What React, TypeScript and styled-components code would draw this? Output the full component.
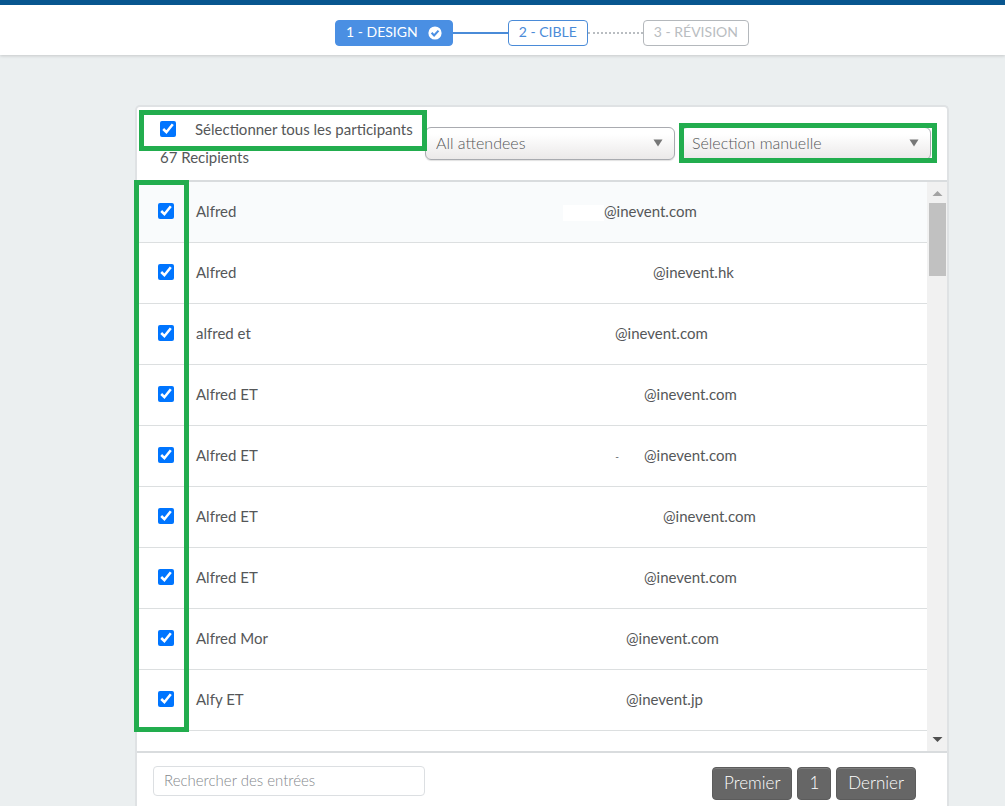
import React from "react";
import styled, { createGlobalStyle, css } from "styled-components";

const GlobalStyle = createGlobalStyle`
  *, *::before, *::after { box-sizing: border-box; }
  html, body { margin: 0; background: #ebeff0; overflow: hidden; }
  body, button, input, select {
    font-family: Lato, "Liberation Sans", sans-serif;
    font-size: 15px;
    color: #555759;
  }
`;

const Page = styled.div`
  overflow: hidden;
`;

const TopBar = styled.header`
  height: 55px;
  padding: 15px 56px 0 135px;
  background: #fff;
  border-top: 5px solid #08568f;
  box-shadow: 0 1px 3px rgba(0, 0, 0, 0.16);
`;

const Stepper = styled.nav`
  display: flex;
  align-items: center;
  justify-content: center;
`;

type StepState = "done" | "current" | "upcoming";

const stepStyles = {
  done: css`
    background: #4a8fe3;
    border-color: #4a8fe3;
    color: #fff;
  `,
  current: css`
    background: #fff;
    border-color: #4a8bd8;
    color: #4a8bd8;
  `,
  upcoming: css`
    background: #fff;
    border-color: #b4b8bc;
    color: #b9bdc1;
  `,
};

const Step = styled.button<{ $state: StepState }>`
  display: flex;
  align-items: center;
  gap: 10px;
  height: 26px;
  padding: 0 10px 3px;
  border: 1px solid;
  border-radius: 4px;
  font-size: 14px;
  line-height: 20px;
  white-space: nowrap;
  ${({ $state }) => stepStyles[$state]}
`;

const StepIcon = styled.svg`
  width: 14px;
  height: 14px;
  margin-top: 3px;
`;

const StepLine = styled.span<{ $dotted?: boolean }>`
  width: 55px;
  border-top: 2px ${({ $dotted }) => ($dotted ? "dotted #b9bdc1" : "solid #4a8bd8")};
`;

const Main = styled.main`
  padding: 50px 56px 0 135px;
`;

const Card = styled.section`
  background: #fff;
  border: 2px solid #dfe2e4;
  border-bottom: 0;
  border-radius: 5px 5px 0 0;
`;

const CardHeader = styled.div`
  display: flex;
  gap: 6px;
  height: 73px;
  padding: 8px 16px 0 23px;
`;

const Summary = styled.div`
  flex: 1;
  line-height: 28px;
  margin-right: -6px;
  white-space: nowrap;
`;

const highlight = css`
  content: "";
  position: absolute;
  z-index: 1;
  border: 5px solid #22ad4e;
  pointer-events: none;
`;

const SelectAll = styled.label`
  position: relative;
  display: flex;
  align-items: center;
  gap: 19px;

  &::after {
    ${highlight}
    inset: -5px -2px -8px -21px;
  }
`;

const Checkbox = styled.input.attrs({ type: "checkbox" })`
  display: block;
  width: 16px;
  height: 16px;
  margin: 0;
  accent-color: #0075ff;
`;

const SelectBox = styled.div<{ $highlighted?: boolean }>`
  position: relative;
  flex: 0 0 250px;
  height: 33px;
  margin-top: 12px;

  ${({ $highlighted }) =>
    $highlighted &&
    css`
      &::after {
        ${highlight}
        inset: -4px -6px -3px -2px;
      }
    `}
`;

const Select = styled.select`
  appearance: none;
  display: block;
  width: 100%;
  height: 33px;
  padding: 0 32px 3px 10px;
  border: 1px solid #a9abb0;
  border-radius: 6px;
  background: linear-gradient(#fff 20%, #ebe9e9);
  box-shadow: 0 1px 1px rgba(0, 0, 0, 0.12);
  font-size: 16px;
  font-weight: 300;
`;

const SelectArrow = styled.svg`
  position: absolute;
  top: 12px;
  right: 12px;
  width: 10px;
  height: 8px;
  fill: #777;
  pointer-events: none;
`;

const ListArea = styled.div`
  position: relative;
  display: flex;
  height: 573px;
  border-top: 2px solid #d9dcde;
  border-bottom: 2px solid #d9dcde;

  &::after {
    ${highlight}
    top: -2px;
    left: -3px;
    width: 55px;
    height: 552px;
  }
`;

const Table = styled.table`
  flex: 1;
  align-self: flex-start;
  border-spacing: 0;
  table-layout: fixed;
`;

const Row = styled.tr<{ $active?: boolean }>`
  height: 61px;
  background: ${({ $active }) => ($active ? "#f9fbfc" : "#fff")};
`;

const Cell = styled.td`
  padding: 0 0 2px;
  border-bottom: 1px solid #dcdfe0;
  line-height: 20px;
  white-space: nowrap;
`;

const CheckCell = styled(Cell)`
  width: 59px;
  padding-left: 21px;
`;

const NameCell = styled(Cell)`
  width: 367px;
`;

const Masked = styled.span<{ $width: number }>`
  display: inline-block;
  width: ${({ $width }) => $width}px;
  height: 16px;
  padding-right: 25px;
  background: #fff;
  vertical-align: middle;
  font-size: 10px;
  line-height: 14px;
  text-align: right;
`;

const ScrollTrack = styled.div`
  display: flex;
  flex: 0 0 20px;
  flex-direction: column;
  align-items: center;
  background: #f1f1f1;
`;

const ScrollThumb = styled.div`
  width: 17px;
  height: 73px;
  margin-bottom: auto;
  background: #c1c1c1;
`;

const ScrollArrow = styled.svg<{ $color: string }>`
  width: 20px;
  height: 21px;
  fill: ${({ $color }) => $color};
`;

const CardFooter = styled.div`
  display: flex;
  align-items: flex-start;
  justify-content: space-between;
  height: 80px;
  padding: 13px 31px 0 16px;
`;

const SearchInput = styled.input`
  width: 272px;
  height: 30px;
  padding: 0 10px 3px;
  border: 1px solid #dcdfe2;
  border-radius: 4px;
  outline: 0;
  font-weight: 300;

  &::placeholder {
    color: #85888c;
    opacity: 1;
  }
`;

const Pager = styled.div`
  display: flex;
  gap: 5px;
  padding-top: 1px;
`;

const PageButton = styled.button`
  height: 33px;
  padding: 0 11px 3px;
  border: 1px solid #5c5c5c;
  border-radius: 4px;
  background: #666;
  box-shadow: inset 0 1px 0 #7d7d7d;
  color: #fff;
  font-size: 17px;
  font-weight: 300;
`;

const attendees = [
  { name: "Alfred", masked: 41, domain: "@inevent.com" },
  { name: "Alfred", masked: 90, domain: "@inevent.hk" },
  { name: "alfred et", masked: 52, domain: "@inevent.com" },
  { name: "Alfred ET", masked: 81, domain: "@inevent.com" },
  { name: "Alfred ET", masked: 81, domain: "@inevent.com", trace: "-" },
  { name: "Alfred ET", masked: 100, domain: "@inevent.com" },
  { name: "Alfred ET", masked: 81, domain: "@inevent.com" },
  { name: "Alfred Mor", masked: 63, domain: "@inevent.com" },
  { name: "Alfy ET", masked: 63, domain: "@inevent.jp" },
];

function Dropdown({ label, highlighted }: { label: string; highlighted?: boolean }) {
  return (
    <SelectBox $highlighted={highlighted}>
      <Select aria-label={label}>
        <option>{label}</option>
      </Select>
      <SelectArrow viewBox="0 0 10 8" aria-hidden="true">
        <path d="M0.5 0.5h9L5 7.5z" />
      </SelectArrow>
    </SelectBox>
  );
}

export default function App() {
  return (
    <Page>
      <GlobalStyle />
      <TopBar>
        <Stepper>
          <Step $state="done">
            1 - DESIGN
            <StepIcon viewBox="0 0 14 14" aria-hidden="true">
              <circle cx="7" cy="7" r="6.6" fill="#fff" />
              <path d="M3.6 6.8l2.5 2.6 4.4-4.8" fill="none" stroke="#4a8fe3" strokeWidth="2.1" />
            </StepIcon>
          </Step>
          <StepLine />
          <Step $state="current">2 - CIBLE</Step>
          <StepLine $dotted />
          <Step $state="upcoming">3 - RÉVISION</Step>
        </Stepper>
      </TopBar>
      <Main>
        <Card>
          <CardHeader>
            <Summary>
              <SelectAll>
                <Checkbox defaultChecked />
                Sélectionner tous les participants
              </SelectAll>
              <div>67 Recipients</div>
            </Summary>
            <Dropdown label="All attendees" />
            <Dropdown label="Sélection manuelle" highlighted />
          </CardHeader>
          <ListArea>
            <Table>
              <tbody>
                {attendees.map(({ name, masked, domain, trace }, i) => (
                  <Row key={i} $active={i === 0}>
                    <CheckCell>
                      <Checkbox defaultChecked aria-label={name} />
                    </CheckCell>
                    <NameCell>{name}</NameCell>
                    <Cell>
                      <Masked $width={masked}>{trace}</Masked>
                      {domain}
                    </Cell>
                  </Row>
                ))}
              </tbody>
            </Table>
            <ScrollTrack>
              <ScrollArrow $color="#a3a3a3" viewBox="0 0 20 21" aria-hidden="true">
                <path d="M5.500 14h10L10.500 9z" />
              </ScrollArrow>
              <ScrollThumb />
              <ScrollArrow $color="#505050" viewBox="0 0 20 21" aria-hidden="true">
                <path d="M5.500 7h10L10.500 12z" />
              </ScrollArrow>
            </ScrollTrack>
          </ListArea>
          <CardFooter>
            <SearchInput type="search" placeholder="Rechercher des entrées" aria-label="Rechercher des entrées" />
            <Pager>
              <PageButton>Premier</PageButton>
              <PageButton>1</PageButton>
              <PageButton>Dernier</PageButton>
            </Pager>
          </CardFooter>
        </Card>
      </Main>
    </Page>
  );
}
